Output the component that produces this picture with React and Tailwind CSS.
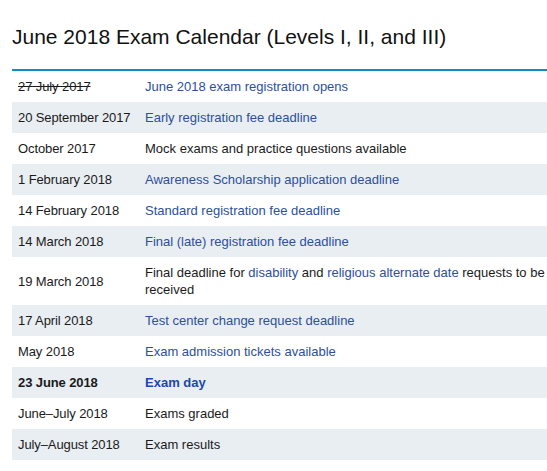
const ROWS = [
  { date: "27 July 2017", struck: true, text: [["link", "June 2018 exam registration opens"]] },
  { date: "20 September 2017", text: [["link", "Early registration fee deadline"]] },
  { date: "October 2017", text: [["plain", "Mock exams and practice questions available"]] },
  { date: "1 February 2018", text: [["link", "Awareness Scholarship application deadline"]] },
  { date: "14 February 2018", text: [["link", "Standard registration fee deadline"]] },
  { date: "14 March 2018", text: [["link", "Final (late) registration fee deadline"]] },
  {
    date: "19 March 2018",
    text: [
      ["plain", "Final deadline for "],
      ["link", "disability"],
      ["plain", " and "],
      ["link", "religious alternate date"],
      ["plain", " requests to be received"],
    ],
  },
  { date: "17 April 2018", text: [["link", "Test center change request deadline"]] },
  { date: "May 2018", text: [["link", "Exam admission tickets available"]] },
  { date: "23 June 2018", bold: true, text: [["link", "Exam day"]] },
  { date: "June\u2013July 2018", text: [["plain", "Exams graded"]] },
  { date: "July\u2013August 2018", text: [["plain", "Exam results"]] },
];

function Row({ row, shaded }) {
  return (
    <div
      className={`grid grid-cols-[127px_1fr] items-center ${
        shaded ? "bg-[#e9eef2]" : "bg-white"
      } ${row.bold ? "font-bold" : ""}`}
    >
      <div
        className={`pl-[6px] py-[7px] tracking-[-0.1px] ${
          row.struck ? "line-through" : ""
        }`}
      >
        {row.date}
      </div>
      <p className="pl-[6px] pr-[2px] py-[7px]">
        {row.text.map(([kind, str], i) =>
          kind === "link" ? (
            <a
              key={i}
              href="#"
              className={row.bold ? "text-[#1c47ad]" : "text-[#2d4f9e]"}
            >
              {str}
            </a>
          ) : (
            str
          )
        )}
      </p>
    </div>
  );
}

export default function App() {
  return (
    <div className="min-h-screen bg-white pl-[12px] pt-[24px] font-['Liberation_Sans',Arial,sans-serif] text-[#1a1a1a]">
      <h1 className="text-[21px] leading-[25px] text-[#111]">
        June 2018 Exam Calendar (Levels I, II, and III)
      </h1>
      <div className="mt-[20px] border-t-2 border-[#0a8bd2] text-[13px] leading-[17px]">
        {ROWS.map((row, i) => (
          <Row key={row.date} row={row} shaded={i % 2 === 1} />
        ))}
      </div>
    </div>
  );
}
